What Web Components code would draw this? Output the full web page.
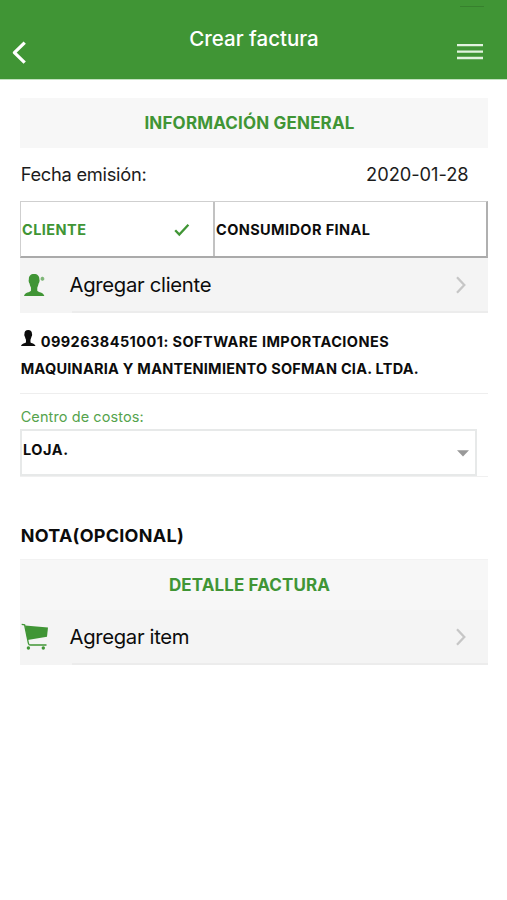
<!DOCTYPE html>
<html lang="es">
<head>
<meta charset="utf-8">
<title>Crear factura</title>
<style>
body{margin:0;background:#fff;font-family:Inter,"Liberation Sans",sans-serif;color:#0c0c0c}
</style>
</head>
<body>
<invoice-page></invoice-page>
<script>
// Single line of text whose tracking is tuned so that it spans a given width.
class TextLine extends HTMLElement{
  connectedCallback(){
    const r=this.attachShadow({mode:'open'});
    r.innerHTML=`<style>:host{display:block;white-space:nowrap;line-height:1}span{display:inline-block}</style><span><slot></slot></span>`;
    const s=r.querySelector('span'),w=+this.getAttribute('span');
    const n=this.textContent.length;
    if(w){s.style.letterSpacing=((w-s.getBoundingClientRect().width)/(n-1))+'px';s.style.marginRight='-1px'}
  }
}
class AppHeader extends HTMLElement{
  connectedCallback(){
    this.attachShadow({mode:'open'}).innerHTML=`<style>
    :host{display:grid;grid-template-columns:60px 1fr 60px;background:#409535;border-bottom:1px solid #c3e2bf;color:#fff;position:relative;box-sizing:border-box;height:80px}
    .back{padding:40px 0 0 11px}.title{padding-top:29px;display:flex;justify-content:center;font-size:20.5px;font-weight:500}
    .menu{padding:43px 0 0 10px}svg{display:block}
    i{position:absolute;left:460px;top:6px;width:24px;height:1px;background:#37812d}</style>
    <div class="back"><svg width="18" height="26" viewBox="0 0 18 26"><path d="M13.7 2.6 3.4 12.6 13.7 22.6" fill="none" stroke="#fff" stroke-width="3.3" stroke-linejoin="round"/></svg></div>
    <div class="title"><text-line span="129.5">Crear factura</text-line></div>
    <div class="menu"><svg width="26" height="18" viewBox="0 0 26 18"><path d="M0 2.2h26M0 8.7h26M0 15h26" stroke="#e2f3df" stroke-width="2.3"/></svg></div><i></i>`;
  }
}
class SectionTitle extends HTMLElement{
  connectedCallback(){
    this.attachShadow({mode:'open'}).innerHTML=`<style>
    :host{display:flex;align-items:center;justify-content:center;height:50px;box-sizing:border-box;padding:1px 10px 0 0;background:#f7f7f7;color:#409535;font-size:17px;font-weight:650}</style><slot></slot>`;
  }
}
class DateRow extends HTMLElement{
  connectedCallback(){
    this.attachShadow({mode:'open'}).innerHTML=`<style>
    :host{display:flex;align-items:center;justify-content:space-between;height:53px;padding:0 20.5px 0 .7px;box-sizing:border-box;font-size:18.3px;color:#1c1c1c}
    ::slotted([slot=value]){padding-bottom:1.5px}</style><slot></slot><slot name="value"></slot>`;
  }
}
class ClientToggle extends HTMLElement{
  connectedCallback(){
    this.attachShadow({mode:'open'}).innerHTML=`<style>
    :host{display:grid;grid-template-columns:194px 1fr;height:57px;box-sizing:border-box;border:1px solid #cfcfcf;border-right:2px solid #b0b0b0;border-bottom:2px solid #aaa;font-size:14.5px;font-weight:700}
    div{display:flex;align-items:center;justify-content:space-between;box-sizing:border-box;padding:2px 0 0 1px}
    .on{color:#409535;border-right:2px solid #c2c2c2;padding-right:23px;font-weight:650}</style>
    <div class="on"><slot name="on"></slot><svg width="16" height="14" viewBox="0 0 16 14"><path d="M1.2 7.2 5.3 11.5 14.4 1.7" fill="none" stroke="#409535" stroke-width="2.3"/></svg></div><div><slot name="off"></slot></div>`;
  }
}
class ActionRow extends HTMLElement{
  connectedCallback(){
    this.attachShadow({mode:'open'}).innerHTML=`<style>
    :host{display:grid;grid-template-columns:49.5px 1fr 34px;align-items:center;height:55px;box-sizing:border-box;font-size:20.3px;padding-bottom:1px;
      background:linear-gradient(#ececec,#ececec) 52px 100%/100% 2px no-repeat,#f4f4f4}
    svg{display:block}</style><slot name="icon"></slot><slot></slot>
    <svg width="14" height="20" viewBox="0 0 14 20"><path d="M3 2.3 10.3 10 3 17.7" fill="none" stroke="#c6c6c6" stroke-width="2.3"/></svg>`;
  }
}
class PersonIcon extends HTMLElement{
  connectedCallback(){
    const plus=this.hasAttribute('plus');
    this.attachShadow({mode:'open'}).innerHTML=`<style>:host{display:inline-block}svg{display:block;width:100%;height:100%}</style>
    <svg viewBox="0 0 22 22" preserveAspectRatio="none" overflow="visible" fill="currentColor"><path d="M10.5 0C6.8 0 5 2 5.1 5.2 4.5 6.3 5.1 8.8 5.8 9.4 6.2 11.6 7.2 12.8 7.3 13.7V16.8C6.2 18.6 1 18.2 0 22H21.3C20.3 18.2 15 18.6 13.9 16.8V13.7C14.2 12.6 15 11.4 15.3 9.4 16.1 8.8 16.7 6.3 16.1 5.2 16.2 2 14.2 0 10.5 0Z"/>${plus?'<path d="M19.3 2.8v4M17.3 4.8h4M17.9 3.4l2.8 2.8M20.7 3.4l-2.8 2.8" stroke="currentColor" stroke-width="1.2" opacity=".65"/>':''}</svg>`;
  }
}
class CartIcon extends HTMLElement{
  connectedCallback(){
    this.attachShadow({mode:'open'}).innerHTML=`<style>:host{display:block;color:#409535}svg{display:block}</style>
    <svg width="28" height="28" viewBox="0 0 28 28" fill="currentColor"><path d="M4 2.6 27 4.6 26 13.8 6.5 17Z"/><path d="M.7 1.3 3.6 1.8 7.4 20.3Q7.8 22 9.5 22H25.5" fill="none" stroke="currentColor" stroke-width="1.3"/><circle cx="7.4" cy="25" r="1.7"/><circle cx="22.3" cy="25" r="1.7"/></svg>`;
  }
}
class ClientInfo extends HTMLElement{
  connectedCallback(){
    this.attachShadow({mode:'open'}).innerHTML=`<style>
    :host{display:flex;flex-direction:column;gap:12px;height:81px;box-sizing:border-box;padding:22px 0 0 .7px;border-bottom:1px solid #eee;font-size:14.5px;font-weight:700}
    div{display:flex;gap:5px;align-items:center}person-icon{width:15px;height:16px;margin:-8px 0 0 0}</style>
    <div><person-icon></person-icon><slot name="first"></slot></div><slot name="second"></slot>`;
  }
}
class CostCenter extends HTMLElement{
  connectedCallback(){
    this.attachShadow({mode:'open'}).innerHTML=`<style>
    :host{display:flex;flex-direction:column;height:83px;border-bottom:1px solid #f0f0f0;box-sizing:border-box}
    .label{height:36px;box-sizing:border-box;padding:16px 0 0 .7px;font-size:14.5px;color:#55a34d}
    .box{display:flex;justify-content:space-between;align-items:center;width:457px;height:47px;flex:none;box-sizing:border-box;border:2px solid #e7e9e9;font-size:14.5px;font-weight:650;padding:0 6px 4px 1px;background:#fff}
    svg{display:block;margin-top:5px}</style>
    <div class="label"><slot name="label"></slot></div><div class="box"><slot></slot><svg width="12" height="7" viewBox="0 0 12 7"><path d="M0 .3H12L6 6.6Z" fill="#999"/></svg></div>`;
  }
}
class NoteLabel extends HTMLElement{
  connectedCallback(){
    this.attachShadow({mode:'open'}).innerHTML=`<style>:host{display:flex;height:83px;box-sizing:border-box;padding:50px 0 0 .7px;border-bottom:1px solid #f2f2f2;font-size:18px;font-weight:650}</style><slot></slot>`;
  }
}
class InvoicePage extends HTMLElement{
  connectedCallback(){
    this.attachShadow({mode:'open'}).innerHTML=`<style>
    :host{display:block;min-height:900px;background:#fff}main{padding:18px 19px 0 20px}
    .person{width:21px;height:22px;color:#409535;margin:0 0 0 4px}.cart{margin-left:1px}</style>
    <app-header></app-header>
    <main>
      <section-title><text-line span="210">INFORMACIÓN GENERAL</text-line></section-title>
      <date-row><text-line span="126">Fecha emisión:</text-line><text-line slot="value" span="102.5">2020-01-28</text-line></date-row>
      <client-toggle><text-line slot="on" span="64">CLIENTE</text-line><text-line slot="off" span="154">CONSUMIDOR FINAL</text-line></client-toggle>
      <action-row><person-icon slot="icon" class="person" plus></person-icon><text-line span="142">Agregar cliente</text-line></action-row>
      <client-info><text-line slot="first" span="348">0992638451001: SOFTWARE IMPORTACIONES</text-line><text-line slot="second" span="398">MAQUINARIA Y MANTENIMIENTO SOFMAN CIA. LTDA.</text-line></client-info>
      <cost-center><text-line slot="label" span="123">Centro de costos:</text-line><text-line span="45">LOJA.</text-line></cost-center>
      <note-label><text-line span="163">NOTA(OPCIONAL)</text-line></note-label>
      <section-title><text-line span="161">DETALLE FACTURA</text-line></section-title>
      <action-row><cart-icon slot="icon" class="cart"></cart-icon><text-line span="120">Agregar item</text-line></action-row>
    </main>`;
  }
}
Object.entries({'text-line':TextLine,'person-icon':PersonIcon,'cart-icon':CartIcon,'app-header':AppHeader,'section-title':SectionTitle,'date-row':DateRow,'client-toggle':ClientToggle,'action-row':ActionRow,'client-info':ClientInfo,'cost-center':CostCenter,'note-label':NoteLabel,'invoice-page':InvoicePage}).forEach(([n,c])=>customElements.define(n,c));
</script>
</body>
</html>
